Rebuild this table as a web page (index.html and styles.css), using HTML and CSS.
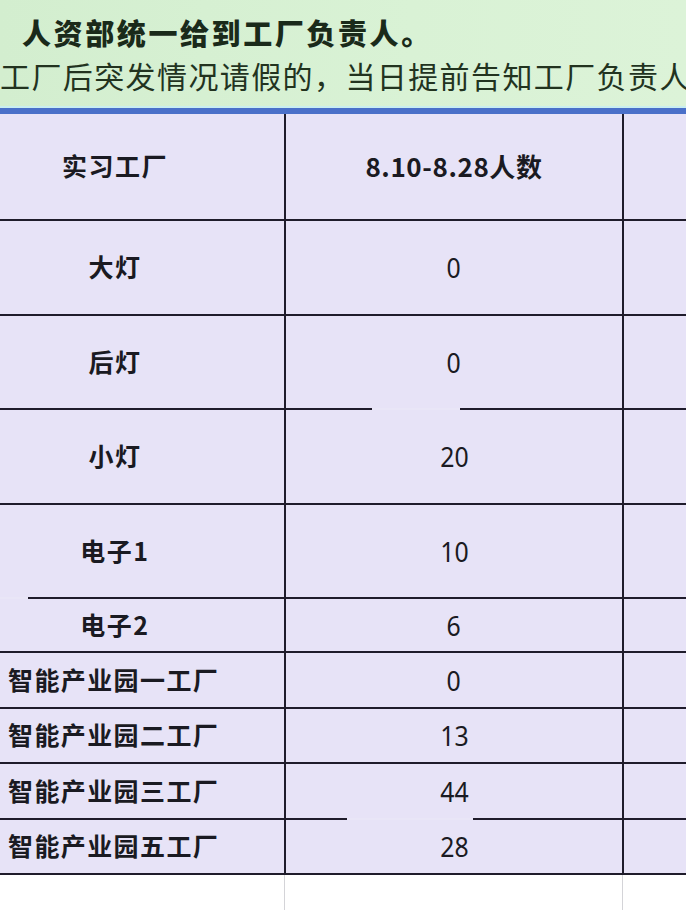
FILE: index.html
```html
<!DOCTYPE html>
<html lang="zh">
<head>
<meta charset="utf-8">
<title>实习工厂人数</title>
<link rel="stylesheet" href="styles.css">
</head>
<body>
<div class="page">
  <div class="banner">
    <div class="line line-bold">人资部统一给到工厂负责人。</div>
    <div class="line line-reg">工厂后突发情况请假的，当日提前告知工厂负责人</div>
  </div>
  <div class="rule"></div>
  <div class="sheet">
    <div class="row h-head">
      <div class="cell name">实习工厂</div>
      <div class="cell head">8.10-8.28人数</div>
      <div class="cell"></div>
    </div>
    <div class="row h-big">
      <div class="cell name">大灯</div>
      <div class="cell num"><span>0</span></div>
      <div class="cell"></div>
    </div>
    <div class="row h-big2 gap-a">
      <div class="cell name">后灯</div>
      <div class="cell num"><span>0</span></div>
      <div class="cell"></div>
    </div>
    <div class="row h-big">
      <div class="cell name">小灯</div>
      <div class="cell num"><span>20</span></div>
      <div class="cell"></div>
    </div>
    <div class="row h-big2 gap-b">
      <div class="cell name">电子1</div>
      <div class="cell num"><span>10</span></div>
      <div class="cell"></div>
    </div>
    <div class="row h-54">
      <div class="cell name">电子2</div>
      <div class="cell num"><span>6</span></div>
      <div class="cell"></div>
    </div>
    <div class="row h-56">
      <div class="cell name left">智能产业园一工厂</div>
      <div class="cell num"><span>0</span></div>
      <div class="cell"></div>
    </div>
    <div class="row h-55">
      <div class="cell name left">智能产业园二工厂</div>
      <div class="cell num"><span>13</span></div>
      <div class="cell"></div>
    </div>
    <div class="row h-56 gap-c">
      <div class="cell name left">智能产业园三工厂</div>
      <div class="cell num"><span>44</span></div>
      <div class="cell"></div>
    </div>
    <div class="row h-55">
      <div class="cell name left">智能产业园五工厂</div>
      <div class="cell num"><span>28</span></div>
      <div class="cell"></div>
    </div>
    <div class="tail">
      <div class="tcell"></div>
      <div class="tcell"></div>
      <div class="tcell last"></div>
    </div>
  </div>
</div>
</body>
</html>
```

FILE: styles.css
```css
* { box-sizing: border-box; }
html, body { margin: 0; padding: 0; background: #ffffff; }
body {
  width: 686px;
  height: 910px;
  overflow: hidden;
  font-family: "Noto Sans CJK SC", "Noto Sans", sans-serif;
}
.page { width: 686px; overflow: hidden; }

.banner {
  height: 106px;
  background: linear-gradient(90deg, #d3eecf 0%, #d9f2d5 60%, #dcf3d8 100%);
  padding-top: 12px;
  color: #1d2e1d;
  overflow: hidden;
}
.line { white-space: nowrap; height: 40px; line-height: 40px; }
.line-bold {
  font-size: 29px;
  font-weight: 900;
  letter-spacing: 2.6px;
  padding-left: 22px;
  color: #1a2a1a;
}
.line-reg {
  margin-top: 3px;
  font-size: 30px;
  font-weight: 400;
  letter-spacing: 1.4px;
  color: #22331f;
}
.rule {
  height: 8px;
  border-top: 2px solid #c9eef0;
  background: #4a70c9;
}

.sheet {
  margin-left: -54px;
  width: 800px;
  background: #e7e3f7;
}
.row {
  position: relative;
  display: grid;
  grid-template-columns: 340px 338px 122px;
  border-bottom: 2px solid #1f1c2b;
}
.cell {
  display: flex;
  align-items: center;
  justify-content: center;
  border-right: 2px solid #1f1c2b;
  color: #1a1a22;
}
.cell:last-child { border-right: none; }
.name {
  font-size: 25px;
  font-weight: 700;
  letter-spacing: 1.5px;
}
.name.left {
  justify-content: flex-start;
  padding-left: 62px;
  letter-spacing: 1.4px;
}
.head {
  font-size: 26px;
  font-weight: 700;
  letter-spacing: 0.6px;
}
.name, .head { padding-bottom: 3px; }
.num span {
  display: inline-block;
  font-size: 27px;
  font-weight: 400;
  font-family: "Noto Sans", "Noto Sans CJK SC", sans-serif;
  transform: scaleX(0.92);
}

.h-head { height: 107px; }
.h-big { height: 95px; }
.h-big2 { height: 94px; }
.h-54 { height: 54px; }
.h-55 { height: 55px; }
.h-56 { height: 56px; }

.gap-a::after,
.gap-b::after,
.gap-c::after {
  content: "";
  position: absolute;
  bottom: -2px;
  height: 2px;
  background: #e9e6f7;
}
.gap-a::after { left: 426px; width: 88px; }
.gap-b::after { left: 0; width: 82px; }
.gap-c::after { left: 401px; width: 126px; }

.tail {
  display: grid;
  grid-template-columns: 339px 338px 123px;
  height: 40px;
  background: #ffffff;
}
.tcell { border-right: 1px solid #d4d4d8; }
.tcell.last { border-right: none; }
```
